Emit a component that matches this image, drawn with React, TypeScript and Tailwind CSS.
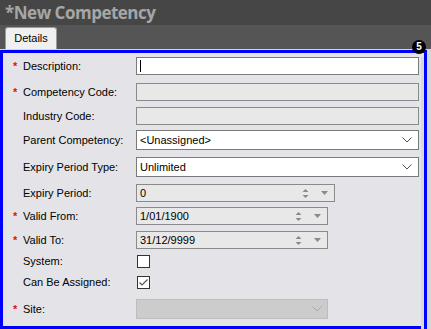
import type { ReactNode } from "react";

const FONT = { fontFamily: '"Liberation Sans", Arial, sans-serif' };

function Chevron({ color = "#505050" }: { color?: string }) {
  return (
    <svg width="10" height="6" viewBox="0 0 10 6" className="shrink-0">
      <path d="M0.5 0.5 L5 5 L9.5 0.5" fill="none" stroke={color} strokeWidth="1" />
    </svg>
  );
}

// spinner arrows + small dropdown triangle used by the number/date pickers
function SpinButtons() {
  return (
    <div className="flex items-center gap-[12px] pr-[6px]">
      <svg width="7" height="11" viewBox="0 0 7 11">
        <path d="M0.5 4 L3.5 1 L6.5 4 Z" fill="#8a8a8a" />
        <path d="M0.5 7 L3.5 10 L6.5 7 Z" fill="#8a8a8a" />
      </svg>
      <svg width="7" height="4" viewBox="0 0 7 4">
        <path d="M0 0 H7 L3.5 4 Z" fill="#8a8a8a" />
      </svg>
    </div>
  );
}

type RowProps = {
  label: string;
  required?: boolean;
  h: number;
  mt: number;
  children: ReactNode;
};

function Row({ label, required, h, mt, children }: RowProps) {
  return (
    <div className="flex items-center" style={{ height: h, marginTop: mt }}>
      <div className="flex w-[133px] shrink-0 items-center pl-[10px] text-[11px] text-black">
        <span className="w-[10px] text-[11px] font-bold leading-none text-[#e01010]">
          {required ? "*" : ""}
        </span>
        <span>{label}</span>
      </div>
      {children}
    </div>
  );
}

export default function App() {
  return (
    <div className="h-[329px] w-[431px] overflow-hidden bg-[#555555]" style={FONT}>
      {/* title bar */}
      <div className="flex h-[25px] items-center bg-[#464646] pl-[5px]">
        <span
          className="text-[17px] font-bold leading-none tracking-[-0.5px] text-[#a6a6a6]"
          style={{ fontFamily: '"Open Sans", "DejaVu Sans", sans-serif' }}
        >
          *New Competency
        </span>
      </div>

      {/* tab strip */}
      <div className="flex h-[25px] items-end border-b border-[#d8d8d8] pl-[5px]">
        <div className="flex h-[22px] w-[52px] items-center justify-center rounded-t-[3px] border border-b-0 border-[#9a9a9a] bg-[#f0f0f0] text-[11px] text-black">
          Details
        </div>
      </div>

      <div className="flex h-[279px]">
        {/* form panel with highlight frame */}
        <div className="relative h-full w-[427px] border-[3px] border-[#0000ff] bg-[#e4e4e8]">
          <span className="absolute right-[-2px] top-[-13px] z-10 flex h-[14px] w-[14px] items-center justify-center rounded-full bg-black text-[10px] font-bold leading-none text-white">
            5
          </span>

          <div className="h-full border-r-[3px] border-[#d9d9dd]">
            <Row label="Description:" required h={18} mt={4}>
              <div className="flex h-full w-[283px] items-center border border-[#7a7a7a] bg-white pl-[3px]">
                <span className="h-[12px] w-px bg-black" />
              </div>
            </Row>
            <Row label="Competency Code:" required h={18} mt={8}>
              <div className="h-full w-[283px] border border-[#8a8a8a] bg-[#e8e8e8]" />
            </Row>
            <Row label="Industry Code:" h={18} mt={6}>
              <div className="h-full w-[283px] border border-[#8a8a8a] bg-[#e8e8e8]" />
            </Row>
            <Row label="Parent Competency:" h={20} mt={5}>
              <div className="flex h-full w-[283px] items-center justify-between border border-[#7a7a7a] bg-white pl-[3px] pr-[6px] text-[11px] text-black">
                <span>&lt;Unassigned&gt;</span>
                <Chevron />
              </div>
            </Row>
            <Row label="Expiry Period Type:" h={20} mt={7}>
              <div className="flex h-full w-[283px] items-center justify-between border border-[#7a7a7a] bg-white pl-[3px] pr-[6px] text-[11px] text-black">
                <span>Unlimited</span>
                <Chevron />
              </div>
            </Row>
            <Row label="Expiry Period:" h={18} mt={7}>
              <div className="flex h-full w-[199px] items-center justify-between border border-[#8a8a8a] bg-[#e8e8e8] pl-[3px] text-[11px] text-black">
                <span>0</span>
                <SpinButtons />
              </div>
            </Row>
            <Row label="Valid From:" required h={18} mt={5}>
              <div className="flex h-full w-[192px] items-center justify-between border border-[#8a8a8a] bg-[#e8e8e8] pl-[3px] text-[11px] text-black">
                <span>1/01/1900</span>
                <SpinButtons />
              </div>
            </Row>
            <Row label="Valid To:" required h={18} mt={6}>
              <div className="flex h-full w-[192px] items-center justify-between border border-[#8a8a8a] bg-[#e8e8e8] pl-[3px] text-[11px] text-black">
                <span>31/12/9999</span>
                <SpinButtons />
              </div>
            </Row>
            <Row label="System:" h={13} mt={6}>
              <div className="ml-[1px] h-[13px] w-[13px] border border-[#333333] bg-white" />
            </Row>
            <Row label="Can Be Assigned:" h={13} mt={8}>
              <div className="ml-[1px] flex h-[13px] w-[13px] items-center justify-center border border-[#333333] bg-white">
                <svg width="9" height="7" viewBox="0 0 9 7">
                  <path d="M0.5 3.5 L3 6 L8.5 0.5" fill="none" stroke="#555555" strokeWidth="1.2" />
                </svg>
              </div>
            </Row>
            <Row label="Site:" required h={20} mt={10}>
              <div className="flex h-full w-[192px] items-center justify-end border border-[#bdbdbd] bg-[#cccccc] pr-[5px]">
                <Chevron color="#a8a8a8" />
              </div>
            </Row>
          </div>
        </div>
        <div className="h-full flex-1 bg-[#d6d6d6]" />
      </div>
    </div>
  );
}
